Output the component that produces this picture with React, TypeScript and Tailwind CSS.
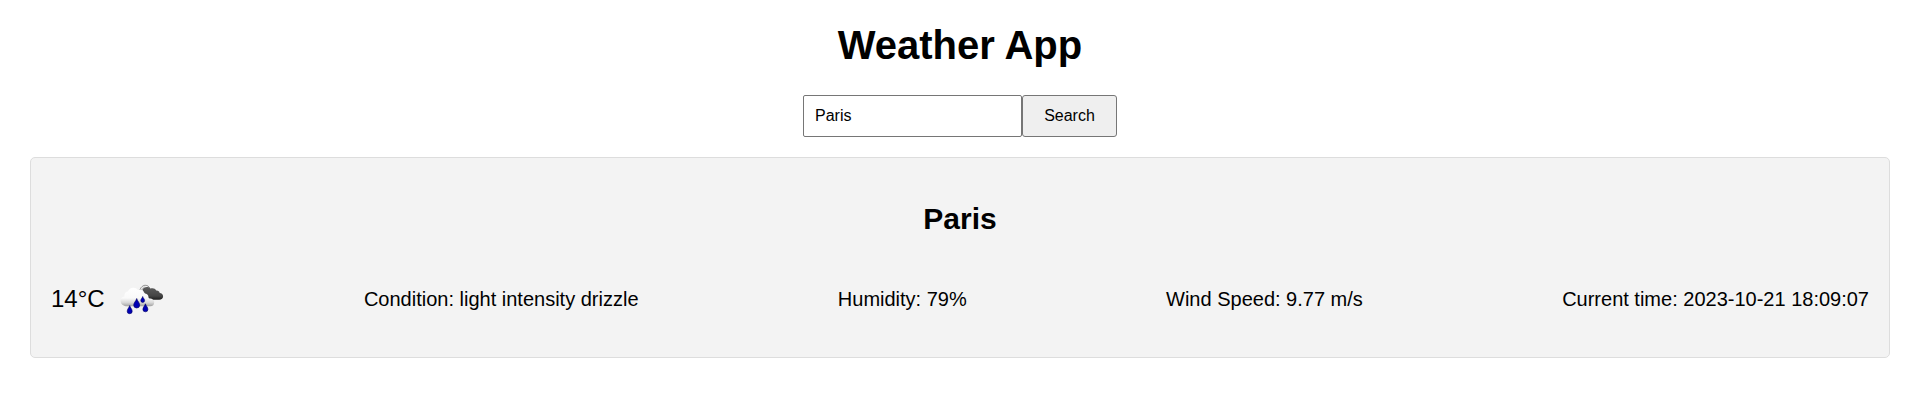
function DrizzleIcon() {
  return (
    <svg viewBox="-0.4 -0.8 50 50" className="ml-[10px] h-[50px] w-[50px]" aria-label="light intensity drizzle">
      <defs>
        <linearGradient id="front" x1="0" y1="0" x2="0" y2="1">
          <stop offset="0" stopColor="#ffffff" />
          <stop offset="0.55" stopColor="#fafafa" />
          <stop offset="0.8" stopColor="#d8d8d8" />
          <stop offset="1" stopColor="#a0a0a0" />
        </linearGradient>
        <linearGradient id="back" x1="0" y1="0" x2="0" y2="1">
          <stop offset="0" stopColor="#5c5c5c" />
          <stop offset="0.7" stopColor="#444444" />
          <stop offset="1" stopColor="#1c1c1c" />
        </linearGradient>
      </defs>
      <path d="M24 17.500c.3-4 3-7 5.800-7 2.400 0 3.900 1.300 4.400 2.800" fill="none" stroke="#8d8d8d" strokeWidth="1" />
      <path d="M25.500 17c.5-3 2.300-4.900 4.300-4.900" fill="none" stroke="#aaa" strokeWidth=".7" />
      <path d="M27 15c1.500-3 5.500-3.700 8-1.200 2.300-1 4.800-.4 5.800 2 1.800-.3 3.300.9 3.500 2.500 2 .2 3.400 1.500 3.400 3.200 0 2-1.500 3.500-4 3.500H37c-2.500 0-4-2-6-4z" fill="url(#back)" />
      <path d="M10.500 31.500C7.500 31 5.200 29 5.200 26c0-2.500 1.500-4 3.800-4.200-.3-3 1.200-5 3.500-5 .8-2.500 3-3.800 5.500-3.800 2.300 0 3.900.9 4.700 2.400 2.800-1.200 5.600.5 5.800 3.300 2.500-.4 4.400 1 4.600 3.500v2c1.500-.8 3.200-.5 4.200.5 1.100.5 1.500 1.600 1.500 2.700 0 2.400-1.400 4.100-3.800 4.100z" fill="url(#front)" />
      <g fill="#0000b5" stroke="#000060" strokeWidth=".6">
        <path d="M14.300 30.800c.5 2 2.500 3.600 2.500 5.600a2.500 2.500 0 0 1-5 0c0-2 2-3.600 2.500-5.600z" />
        <path d="M21.300 23.700c.6 2.500 3 4.300 3 6.500a3 3 0 0 1-6 0c0-2.200 2.400-4 3-6.500z" />
        <path d="M27.300 21.700c.3 1.500 1.900 2.500 1.900 4a1.900 1.900 0 0 1-3.800 0c0-1.500 1.600-2.500 1.900-4z" />
        <path d="M30 29c.5 2 2.500 3.500 2.500 5.500a2.500 2.500 0 0 1-5 0c0-2 2-3.500 2.500-5.500z" />
      </g>
    </svg>
  );
}

export default function App() {
  return (
    <main className="bg-white px-[30px] pt-[22px] text-center font-['Liberation_Sans',Arial,sans-serif] text-black">
      <h1 className="text-[40px] leading-[46px] font-bold">Weather App</h1>
      <form className="mt-[27px] flex justify-center" onSubmit={(e) => e.preventDefault()}>
        <input
          defaultValue="Paris"
          aria-label="City"
          className="h-[42px] w-[219px] rounded-[2px] border border-[#767676] bg-white px-[11px] text-[16px] outline-none"
        />
        <button className="h-[42px] w-[95px] rounded-[3px] border border-[#767676] bg-[#efefef] text-[16px]">
          Search
        </button>
      </form>
      <section className="mt-5 h-[201px] rounded-[5px] border border-[#dddddd] bg-[#f3f3f3] px-5 pt-[43px]">
        <h2 className="text-[30px] leading-[35px] font-bold">Paris</h2>
        <div className="mt-[38px] flex items-center justify-between text-[20px] leading-[23px]">
          <div className="flex items-center text-[24px] leading-[28px]">
            <span>14°C</span>
            <DrizzleIcon />
          </div>
          <p>Condition: light intensity drizzle</p>
          <p>Humidity: 79%</p>
          <p>Wind Speed: 9.77 m/s</p>
          <p>Current time: 2023-10-21 18:09:07</p>
        </div>
      </section>
    </main>
  );
}
